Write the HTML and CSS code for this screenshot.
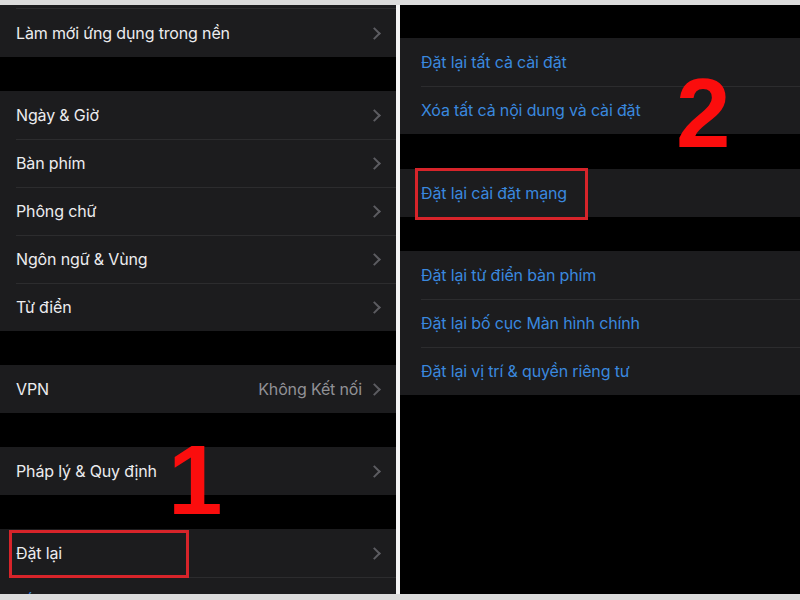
FILE: index.html
```html
<!DOCTYPE html>
<html lang="vi">
<head>
<meta charset="utf-8">
<title>Đặt lại</title>
<link rel="stylesheet" href="styles.css">
</head>
<body>
<div class="frame">
  <div class="screens">
    <div class="panel left">
      <div class="group top-group">
        <div class="stub"></div>
        <div class="row"><span class="label">Làm mới ứng dụng trong nền</span><span class="chev"></span></div>
      </div>
      <div class="group">
        <div class="row"><span class="label">Ngày &amp; Giờ</span><span class="chev"></span></div>
        <div class="row"><span class="label">Bàn phím</span><span class="chev"></span></div>
        <div class="row"><span class="label">Phông chữ</span><span class="chev"></span></div>
        <div class="row"><span class="label">Ngôn ngữ &amp; Vùng</span><span class="chev"></span></div>
        <div class="row"><span class="label">Từ điển</span><span class="chev"></span></div>
      </div>
      <div class="group">
        <div class="row"><span class="label">VPN</span><span class="value">Không Kết nối</span><span class="chev"></span></div>
      </div>
      <div class="group">
        <div class="row"><span class="label">Pháp lý &amp; Quy định</span><span class="chev"></span></div>
      </div>
      <div class="group">
        <div class="row"><span class="label">Đặt lại</span><span class="chev"></span></div>
        <div class="row"><span class="label link">Tắt máy</span></div>
      </div>
    </div>
    <div class="divider"></div>
    <div class="panel right">
      <div class="group first">
        <div class="row"><span class="label link">Đặt lại tất cả cài đặt</span></div>
        <div class="row"><span class="label link">Xóa tất cả nội dung và cài đặt</span></div>
      </div>
      <div class="group gap35">
        <div class="row"><span class="label link">Đặt lại cài đặt mạng</span></div>
      </div>
      <div class="group">
        <div class="row"><span class="label link">Đặt lại từ điển bàn phím</span></div>
        <div class="row"><span class="label link">Đặt lại bố cục Màn hình chính</span></div>
        <div class="row"><span class="label link">Đặt lại vị trí &amp; quyền riêng tư</span></div>
      </div>
    </div>
  </div>
  <div class="mark box-1"></div>
  <div class="mark box-2"></div>
  <div class="num num-1">1</div>
  <div class="num num-2">2</div>
</div>
</body>
</html>
```

FILE: styles.css
```css
* { box-sizing: border-box; }
html, body { margin: 0; padding: 0; }
body {
  width: 800px;
  height: 600px;
  overflow: hidden;
  background: #dcdcdc;
  font-family: "Inter", "Noto Sans", sans-serif;
}
.frame {
  position: relative;
  width: 800px;
  height: 600px;
  padding-top: 5px;
  padding-bottom: 6px;
}
.screens {
  display: grid;
  grid-template-columns: 396px 4px 400px;
  height: 589px;
  overflow: hidden;
}
.panel {
  background: #000;
  display: flex;
  flex-direction: column;
  overflow: hidden;
}
.divider { background: #f4f4f4; }
.group {
  background: #1c1c1e;
  margin-top: 34px;
  display: flex;
  flex-direction: column;
}
.top-group { margin-top: 0; }
.stub {
  height: 4px;
  border-bottom: 1px solid #2c2c2e;
  margin-left: 16px;
}
.right .first { margin-top: 33px; }
.right .gap35 { margin-top: 35px; }
.row {
  height: 48px;
  display: flex;
  align-items: center;
  padding: 0 15px 0 16px;
  position: relative;
  flex-shrink: 0;
}
.right .row { padding-left: 21px; }
.row + .row::before {
  content: "";
  position: absolute;
  top: 0;
  left: 16px;
  right: 0;
  height: 1px;
  background: #2c2c2e;
}
.right .row + .row::before { left: 21px; }
.label {
  flex: 1;
  color: #ececef;
  font-size: 16px;
  letter-spacing: -0.15px;
  white-space: nowrap;
}
.label.link { color: #3a88de; }
.value {
  color: #919196;
  font-size: 16px;
  letter-spacing: -0.15px;
  margin-right: 11px;
}
.chev {
  width: 8px;
  height: 12px;
  position: relative;
}
.chev::after {
  content: "";
  position: absolute;
  left: -3px;
  top: 1.5px;
  width: 7px;
  height: 7px;
  border-top: 2px solid #5c5c61;
  border-right: 2px solid #5c5c61;
  transform: rotate(45deg);
}
.mark {
  position: absolute;
  border: 3px solid #d7242a;
}
.box-1 { left: 9px; top: 530px; width: 180px; height: 48px; }
.box-2 { left: 415px; top: 168px; width: 173px; height: 52px; }
.num {
  position: absolute;
  font-family: "Liberation Sans", Arial, sans-serif;
  font-weight: bold;
  font-size: 98px;
  line-height: 98px;
  color: #fb0d0d;
}
.num-1 { left: 168px; top: 431px; }
.num-2 { left: 676px; top: 64px; }
```
